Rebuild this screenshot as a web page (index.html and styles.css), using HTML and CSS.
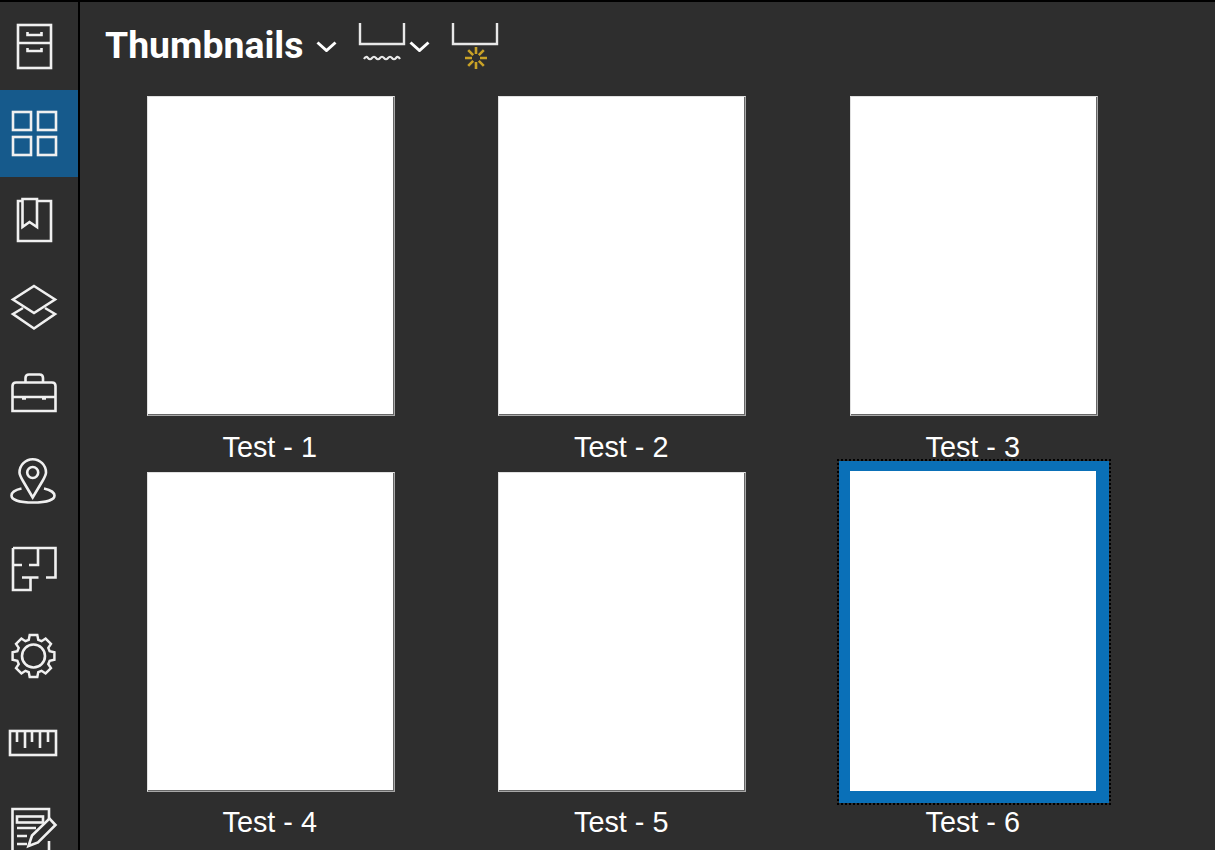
FILE: index.html
```html
<!DOCTYPE html>
<html lang="en">
<head>
<meta charset="utf-8">
<title>Thumbnails</title>
<link rel="stylesheet" href="styles.css">
</head>
<body>
<div class="app">
  <nav class="rail">
    <div class="rail-item">
      <svg class="ico" viewBox="0 0 56 56"><rect x="12" y="7" width="33" height="43"/><path d="M12 25H45M21.500 14V17H35.500V14M21.500 30V33H35.500V30"/></svg>
    </div>
    <div class="rail-item active">
      <svg class="ico" viewBox="0 0 56 56"><rect x="7" y="6" width="18" height="18"/><rect x="32" y="6" width="18" height="18"/><rect x="7" y="31" width="18" height="18"/><rect x="32" y="31" width="18" height="18"/></svg>
    </div>
    <div class="rail-item">
      <svg class="ico" viewBox="0 0 56 56"><path d="M16 8H12V48H45V8H31"/><path d="M16.500 6H31V34L23.500 29L16.500 34Z"/></svg>
    </div>
    <div class="rail-item">
      <svg class="ico" viewBox="0 0 56 56"><path d="M28 6L49 19.500L28 33L7 19.500Z"/><path d="M17 28L7 34L28 48.500L49 34L39 28"/></svg>
    </div>
    <div class="rail-item">
      <svg class="ico" viewBox="0 0 56 56"><path d="M6.500 44V19Q6.500 15.500 10 15.500H46Q49.500 15.500 49.500 19V44Z"/><path d="M19.500 15.500V11Q19.500 7.500 23 7.500H33.500Q37 7.500 37 11V15.500"/><path d="M6.500 30H49.500"/><path class="thick" d="M16 31H20M36 31H40"/></svg>
    </div>
    <div class="rail-item">
      <svg class="ico" viewBox="0 0 56 56"><path d="M26.700 42.500L17 26Q13.500 20 13.500 17.500A13.200 13.200 0 0 1 40 17.500Q40 20 36.500 26Z"/><circle cx="26.700" cy="17.500" r="5.500"/><path d="M15.500 33.500C8.500 35 5.500 38 5.500 40.500C5.500 45 14 47.500 27 47.500C40 47.500 48.500 45 48.500 40.500C48.500 38 45 35 38 33.500"/></svg>
    </div>
    <div class="rail-item">
      <svg class="ico" viewBox="0 0 56 56"><path d="M7 6H49.500V35.500H40M32 6V23H23M7 6V48H24.500V35.500M7 23H16M16 35.500H32.500"/></svg>
    </div>
    <div class="rail-item">
      <svg class="ico" viewBox="0 0 56 56"><path transform="translate(27.500 27) scale(.95)" d="M-5-17L-4-22H4L5-17L8.490-15.560L12.730-18.380L18.380-12.730L15.560-8.490L17-5L22-4V4L17 5L15.560 8.490L18.380 12.730L12.730 18.380L8.490 15.560L5 17L4 22H-4L-5 17L-8.490 15.560L-12.730 18.380L-18.380 12.730L-15.560 8.490L-17 5L-22 4V-4L-17-5L-15.560-8.490L-18.380-12.730L-12.730-18.380L-8.490-15.560Z"/><circle cx="27.500" cy="27" r="11.500"/></svg>
    </div>
    <div class="rail-item">
      <svg class="ico" viewBox="0 0 56 56"><rect x="4" y="15" width="46" height="24"/><path d="M11 15V26M19 15V32M26 15V26M34 15V32M42 15V26"/></svg>
    </div>
    <div class="rail-item">
      <svg class="ico" viewBox="0 0 56 56"><path d="M43 16V6H6.500V60H43V38"/><rect x="11" y="13.500" width="26" height="6"/><path d="M11 25H30M11 33H21M11 41H21"/><path d="M22.500 43L26 32.500L43.500 15.500L49.500 22L32 39.500Z"/></svg>
    </div>
  </nav>
  <main class="content">
    <header class="toolbar">
      <h1 class="title">Thumbnails</h1>
      <svg class="chev chev-title" viewBox="0 0 21 11"><path d="M1.500 1.500L10.500 9.500L19.500 1.500"/></svg>
      <svg class="tray" viewBox="0 0 46 42"><path d="M1 0V21H45V0"/><path class="wave" d="M5 36Q7 32.500 9 35T13 35T17 35T21 35T25 35T29 35T33 35T37 35T41 36"/></svg>
      <svg class="chev chev-tray" viewBox="0 0 21 11"><path d="M1.500 1.500L10.500 9.500L19.500 1.500"/></svg>
      <svg class="tray tray-last" viewBox="0 0 46 48"><path d="M1 0V21H45V0"/><path class="sun" d="M24 24V31M24 39V46M13 35H20M28 35H35M16.200 27.200L21.200 32.200M26.800 37.800L31.800 42.800M31.800 27.200L26.800 32.200M21.200 37.800L16.200 42.800"/></svg>
    </header>
    <section class="grid">
      <figure class="cell"><div class="frame"><div class="page"></div></div><figcaption class="label">Test - 1</figcaption></figure>
      <figure class="cell"><div class="frame"><div class="page"></div></div><figcaption class="label">Test - 2</figcaption></figure>
      <figure class="cell"><div class="frame"><div class="page"></div></div><figcaption class="label">Test - 3</figcaption></figure>
      <figure class="cell"><div class="frame"><div class="page"></div></div><figcaption class="label">Test - 4</figcaption></figure>
      <figure class="cell"><div class="frame"><div class="page"></div></div><figcaption class="label">Test - 5</figcaption></figure>
      <figure class="cell"><div class="frame selected"><div class="page"></div></div><figcaption class="label">Test - 6</figcaption></figure>
    </section>
  </main>
</div>
</body>
</html>
```
FILE: styles.css
```css
* { box-sizing: border-box; }
html, body { margin: 0; height: 100%; overflow: hidden; background: #2e2e2e; }
.app { display: flex; height: 850px; border-top: 2px solid #000; overflow: hidden; }
.rail { width: 80px; flex: none; border-right: 2px solid #000; display: flex; flex-direction: column; }
.rail-item { height: 87px; flex: none; padding: 16px 0 0 6px; }
.rail-item:first-child, .rail-item:nth-child(5) { height: 88px; }
.rail-item.active { background: #165a8c; }
.ico { display: block; width: 56px; height: 56px; fill: none; stroke: #f0f0f0; stroke-width: 2.6; overflow: visible; }
.thick { stroke-width: 3.6; }
.content { flex: 1; min-width: 0; display: flex; flex-direction: column; }
.toolbar { height: 83px; flex: none; display: flex; align-items: flex-start; padding-left: 25px; }
.title { margin: 20px 0 0; font: 700 37.4px/46px Roboto, sans-serif; color: #fff; }
.chev { width: 21px; height: 11px; fill: none; stroke: #fff; stroke-width: 3; }
.chev-title { margin: 39px 0 0 13px; }
.tray { width: 46px; height: 42px; margin: 21px 0 0 22px; fill: none; stroke: #e8e8e8; stroke-width: 2.4; overflow: visible; }
.chev-tray { margin: 39px 0 0 4px; }
.tray-last { height: 48px; margin-left: 22px; }
.wave { stroke-width: 2.2; }
.sun { stroke: #c9a227; stroke-width: 2.6; }
.grid { display: grid; grid-template-columns: repeat(3, 351.5px); grid-auto-rows: 375.6px; padding-left: 15px; }
.cell { margin: 0; display: flex; flex-direction: column; align-items: center; }
.frame { width: 270px; height: 342px; padding: 11px; flex: none; }
.page { width: 248px; height: 320px; background: #fff; border: 1px solid #a8a8a8; border-top-color: #e0e0e0; border-left-color: #e0e0e0; box-shadow: inset -1px -1px 0 #666; }
.frame.selected { background: #0a70b8; padding: 10px 13px 12px 11px; outline: 2px dotted #000; outline-offset: 0; }
.frame.selected .page { width: 246px; height: 320px; border: 0; box-shadow: none; }
.label { font: 28.8px/30px "Liberation Sans", Arial, sans-serif; color: #fff; margin-top: 4.7px; padding-right: 2px; }
```
